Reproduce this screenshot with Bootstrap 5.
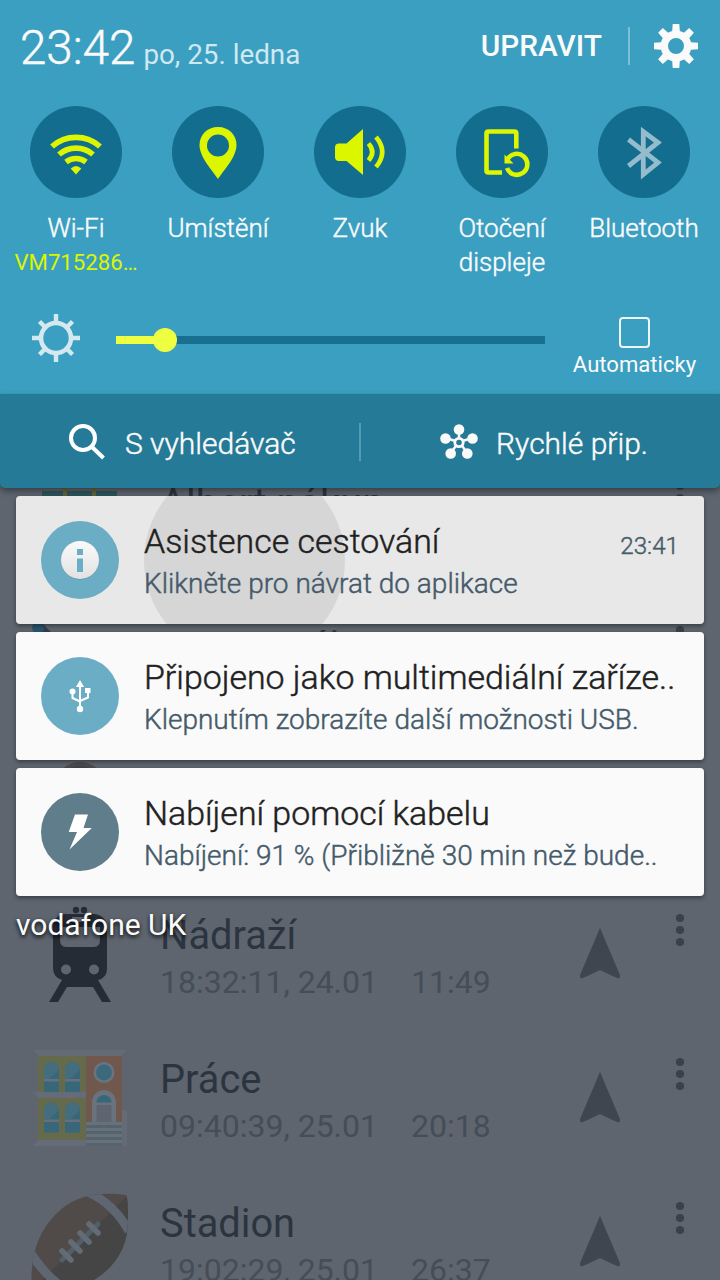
<!DOCTYPE html>
<html lang="cs">
<head>
<meta charset="utf-8">
<meta name="viewport" content="width=device-width, initial-scale=1">
<title>Oznámení</title>
<link href="https://cdn.jsdelivr.net/npm/bootstrap@5.3.0/dist/css/bootstrap.min.css" rel="stylesheet">
<style>
html,body{height:1280px;overflow:hidden}
body{font-family:Roboto,"Noto Sans",sans-serif;background:#5e656f;color:#fafafa;line-height:1;position:relative;width:720px}
svg{display:block;flex:none}
/* app list under the shade */
.app-head{height:456px}
.place{height:144px}
.place-icon{width:160px;padding-left:32px;padding-top:24px}
.place-text{width:420px;padding-top:25px}
.place-name{font-size:39.8px;line-height:46px;color:#2c3440;white-space:nowrap}
.place-meta{font-size:32px;line-height:38px;color:#454d57;margin-top:4px}
.place-date{width:251px}
.place-nav{width:40px;padding-top:40px}
.place-more{padding-left:56px;padding-top:24px}
/* shade */
.shade{position:absolute;left:0;top:0;width:720px;z-index:2}
.quick{background:#3b9fc1;height:394px}
.head{height:92px;padding:0 22px 0 20px}
.clock{font-size:47.5px;line-height:56px}
.date{font-size:27.8px;line-height:34px;color:#d0e8f0;margin-left:8px}
.edit{font-size:29.8px;font-weight:500;line-height:34px;margin-right:2px}
.vline{width:2px;height:38px;background:#7dbfd6}
.toggles{height:222px;padding:14px 5px 0}
.toggle{width:142px}
.disc{width:92px;height:92px;background:#136d8f;border-radius:50%}
.toggle-name{font-size:26px;line-height:33.5px;margin-top:14px}
.ssid{font-size:22.2px;line-height:30px;color:#dcf600;margin-top:1px}
.bright{padding-left:32px}
.track{width:429px;height:8px;background:#196f8f;margin:22px 0 0 36px}
.track-on{height:8px;width:49px;background:#eeff41}
.knob{width:24px;height:24px;border-radius:50%;background:#eeff41;position:absolute;left:37px;top:-8px}
.autobox{padding:3px 0 0 4px}
.box{width:31px;height:31px;border:2.5px solid #eef5f8;border-radius:4px}
.auto{font-size:22.1px;line-height:28px;margin-top:2px}
.links{background:#257b97;height:94px;border-radius:0 0 5px 5px;box-shadow:0 3px 6px rgba(0,0,0,.4);padding-top:2px}
.lk{font-size:30px;line-height:36px}
.lka{width:359px;padding-left:69px}
.lka .lk{margin-left:20px;margin-top:3px}
.lkb{padding-left:79px}
.lkb .lk{margin-left:18px;margin-top:3px}
.notes{padding:8px 16px 0;gap:8px}
.note{height:128px;border-radius:4px;background:#fafafa;box-shadow:0 2px 4px rgba(0,0,0,.4);overflow:hidden;padding:25px 25px 0;position:relative}
.note.pressed{background:#e8e8e8}
.ripple{position:absolute;left:128px;top:-36px;width:201px;height:201px;border-radius:50%;background:#d6d6d6}
.ico{width:78px;height:78px;border-radius:50%;background:#6aadc4;position:relative}
.ico.slate{background:#607d8b}
.txt{margin-left:25px;position:relative;white-space:nowrap}
.ttl{font-size:33.9px;line-height:40px;color:#212121;margin-top:1px}
.sub{font-size:28px;line-height:34px;color:#455a6a;margin-top:5px}
.when{font-size:24.2px;line-height:30px;color:#455a6a;position:relative;margin-top:10px}
.clock,.toggle-name,.lk,.ttl,.sub,.when{font-weight:300;-webkit-text-stroke:.45px currentColor}
.carrier{font-size:30px;line-height:36px;padding:11px 16px;text-shadow:0 2px 4px #000}
</style>
</head>
<body>
<svg width="0" height="0" class="position-absolute"><defs>
<g id="nav"><path d="M20 0 40 47q.6 4-3 3L20 42 3 50q-3.600 1-3-3Z" fill="#3f4650"/></g>
<g id="dots" fill="#3a414b"><circle cx="4" cy="6" r="4.100"/><circle cx="4" cy="18" r="4.100"/><circle cx="4" cy="30" r="4.100"/></g>
</defs></svg>

<main>
 <div class="app-head"></div>
 <div class="place d-flex">
  <div class="place-icon"><svg width="96" height="96"><path d="M10 11h75v60H10Z" fill="#2d555c"/><path d="M31 8h4v60h-4ZM60 8h4v60h-4Z" fill="#65643f"/></svg></div>
  <div class="place-text"><div class="place-name">Albert nákup</div></div>
  <div class="place-nav"></div>
  <div class="place-more"><svg width="8" height="36" overflow="visible"><use href="#dots"/></svg></div>
 </div>
 <div class="place d-flex">
  <div class="place-icon"><svg width="96" height="96"><path d="M5 2 11 0 50 40 40 50 4 12Z" fill="#323e52"/><circle cx="6" cy="4" r="6" fill="#2b546b"/></svg></div>
  <div class="place-text"><div class="place-name">Pan Novák</div></div>
  <div class="place-nav"></div>
  <div class="place-more"><svg width="8" height="36" overflow="visible"><use href="#dots"/></svg></div>
 </div>
 <div class="place d-flex">
  <div class="place-icon"><svg width="96" height="96" overflow="visible"><circle cx="48" cy="20" r="26" fill="#4f4a4c"/><circle cx="48" cy="22" r="24" fill="#3d4550"/></svg></div>
 </div>
 <div class="place d-flex">
  <div class="place-icon"><svg width="96" height="96" overflow="visible"><g fill="#252c36"><circle cx="44" cy="-2" r="3.200"/><circle cx="52" cy="-2" r="3.200"/><path fill-rule="evenodd" d="M33 2h30q12 2 12 14v40q0 10-9 12l13 22h-9L61 75H35L26 90h-9l13-22q-9-3-9-12V16Q21 4 33 2ZM40 5v5h17V5ZM28 15v13q0 7 6 7h28q6 0 6-7V15ZM34 52.500a5 5 0 1 0 0 10 5 5 0 0 0 0-10ZM62 52.500a5 5 0 1 0 0 10 5 5 0 0 0 0-10Z"/></g></svg></div>
  <div class="place-text"><div class="place-name">Nádraží</div><div class="place-meta d-flex"><span class="place-date">18:32:11, 24.01</span><span>11:49</span></div></div>
  <div class="place-nav"><svg width="40" height="52"><use href="#nav"/></svg></div>
  <div class="place-more"><svg width="8" height="36" overflow="visible"><use href="#dots"/></svg></div>
 </div>
 <div class="place d-flex">
  <div class="place-icon"><svg width="96" height="96" overflow="visible">
   <path d="M1-6h94l-6 6H7Z" fill="#646b76"/><path d="M6 0h48v84H6Z" fill="#666a4c"/><path d="M54 0h36v66H54Z" fill="#70584e"/>
   <path d="M1 36h53v6H7ZM6 84h48v6H1Z" fill="#656c77"/>
   <g id="wins"><g id="win"><path d="M12 36V13.500a7.500 7.500 0 0 1 15 0V36Z" fill="#376779"/><path d="M12 23V13.500a7.500 7.500 0 0 1 15 0L17 23Z" fill="#446e7e"/><path d="M12 23h15v2.500H12Z" fill="#68717b"/></g><use href="#win" x="21"/></g><use href="#wins" y="40.500"/>
   <circle cx="72" cy="16.500" r="9.200" fill="#3b6a7c" stroke="#6b747e" stroke-width="2.600"/>
   <path d="M60 66V46a12 12 0 0 1 24 0v20Z" fill="#6a727d"/><path d="M64.500 46.500a7.500 7.500 0 0 1 15 0Z" fill="#376779"/><path d="M64.500 49h15v17h-15Z" fill="#5f6570"/>
   <path d="M54 66h36v24H54Z" fill="#65717b"/><path d="M54 69h36v3H54ZM54 75h36v3H54ZM54 81h36v3H54ZM54 87h36v3H54Z" fill="#56626c"/><path d="M90 54h5v36h-5Z" fill="#646b76"/>
  </svg></div>
  <div class="place-text"><div class="place-name">Práce</div><div class="place-meta d-flex"><span class="place-date">09:40:39, 25.01</span><span>20:18</span></div></div>
  <div class="place-nav"><svg width="40" height="52"><use href="#nav"/></svg></div>
  <div class="place-more"><svg width="8" height="36" overflow="visible"><use href="#dots"/></svg></div>
 </div>
 <div class="place d-flex">
  <div class="place-icon"><svg width="96" height="96" overflow="visible">
   <clipPath id="ball"><path d="M94-5Q96-3 96 18 97 58 62 80 38 92 0 90-4 42 24 14 48-11 94-5Z"/></clipPath>
   <g clip-path="url(#ball)"><path d="M-5-10h105v110H-5Z" fill="#504b49"/><path d="M97-6V95H-5Z" fill="#464545"/>
   <path d="M56-8q26 12 41 39M-2 52q18 28 40 40" fill="none" stroke="#5d6671" stroke-width="9"/></g>
   <path d="M30 60 66 24" stroke="#525e68" stroke-width="5" stroke-linecap="round"/>
   <path d="m57 24 9 9M48 33l9 9M39 42l9 9M30 51l9 9" stroke="#626c76" stroke-width="5.500" stroke-linecap="round"/>
  </svg></div>
  <div class="place-text"><div class="place-name">Stadion</div><div class="place-meta d-flex"><span class="place-date">19:02:29, 25.01</span><span>26:37</span></div></div>
  <div class="place-nav"><svg width="40" height="52"><use href="#nav"/></svg></div>
  <div class="place-more"><svg width="8" height="36" overflow="visible"><use href="#dots"/></svg></div>
 </div>
</main>

<section class="shade">
 <header class="quick">
  <div class="head d-flex align-items-center">
   <div class="d-flex align-items-baseline flex-grow-1 pt-1"><span class="clock">23:42</span><span class="date">po, 25. ledna</span></div>
   <span class="edit">UPRAVIT</span><span class="vline ms-4 me-4"></span>
   <svg width="44" height="44" viewBox="-22 -22 44 44"><g fill="#fafafa"><g id="t1"><path id="t0" d="M-3.300-22h6.600L4-12h-8ZM-3.300 22h6.600L4 12h-8Z"/><use href="#t0" transform="rotate(90)"/></g><use href="#t1" transform="rotate(45)"/></g><circle r="11.700" fill="none" stroke="#fafafa" stroke-width="7.400"/></svg>
  </div>
  <div class="toggles d-flex text-center">
   <div class="toggle"><div class="disc mx-auto"><svg width="92" height="92" fill="none" stroke="#dcf600" stroke-width="5.600"><path d="M22 40.500a36 36 0 0 1 48 0M29 48.500a26 26 0 0 1 34 0M36 56a16 16 0 0 1 20 0"/><path d="M40.700 62.500q5.300-5 10.600 0L46 68.500Z" fill="#dcf600" stroke="none"/></svg></div><div class="toggle-name">Wi-Fi</div><div class="ssid">VM715286…</div></div>
   <div class="toggle"><div class="disc mx-auto"><svg width="92" height="92"><path fill="#dcf600" fill-rule="evenodd" d="M46 21c11 0 18.500 8 18.500 18C64.500 51 52 64 46 73 40 64 27.500 51 27.500 39 27.500 29 35 21 46 21Zm0 7.500a11 11 0 1 0 0 22 11 11 0 0 0 0-22Z"/></svg></div><div class="toggle-name">Umístění</div></div>
   <div class="toggle"><div class="disc mx-auto"><svg width="92" height="92"><path fill="#dcf600" d="M25 37.500h7.500L49 23v46L32.500 55H25q-4 0-4-4v-9.500q0-4 4-4Z"/><path d="M54.500 37.500q7.500 8.500 0 17M62 31q12.500 15 0 30" fill="none" stroke="#dcf600" stroke-width="4.600"/></svg></div><div class="toggle-name">Zvuk</div></div>
   <div class="toggle"><div class="disc mx-auto"><svg width="92" height="92" fill="none" stroke="#dcf600" stroke-width="4.600"><path d="M60.300 42.500V27.500q0-2-2-2H32.500q-2 0-2 2v37q0 2 2 2H46"/><path d="M51.500 53.500A10.500 10.500 0 1 1 51 62"/><path d="M48.500 48.500v9h9Z" fill="#dcf600" stroke="none"/></svg></div><div class="toggle-name">Otočení<br>displeje</div></div>
   <div class="toggle"><div class="disc mx-auto"><svg width="92" height="92"><path d="M30.500 33.500 60 56.500 45.300 68.500V25.500L60 36.500 30.500 60" fill="none" stroke="#94bccd" stroke-width="4.800"/></svg></div><div class="toggle-name">Bluetooth</div></div>
  </div>
  <div class="bright d-flex">
   <svg width="48" height="48" viewBox="-24 -24 48 48"><circle r="15" fill="none" stroke="#d4e8ef" stroke-width="4.600"/><path stroke="#d4e8ef" stroke-width="4.400" d="M0-24v8M0 24v-8M-24 0h8M24 0h-8M-16.500-16.500l5 5M16.500 16.500l-5-5M-16.500 16.500l5-5M16.500-16.500l-5 5"/></svg>
   <div class="track position-relative"><div class="track-on"></div><span class="knob"></span></div>
   <div class="autobox flex-grow-1 d-flex flex-column align-items-center"><span class="box"></span><span class="auto">Automaticky</span></div>
  </div>
 </header>
 <nav class="links d-flex align-items-center">
  <div class="d-flex align-items-center lka"><svg width="36" height="36" fill="none" stroke="#fff" stroke-width="4"><circle cx="14" cy="14" r="12"/><path d="m22.500 22.500 12 11.500"/></svg><span class="lk">S vyhledávač</span></div>
  <span class="vline opacity-50"></span>
  <div class="d-flex align-items-center lkb"><svg width="38" height="36" stroke="#fafafa" stroke-width="2.500"><path d="M19 18V6M19 18 5.500 14M19 18l13.500-4M19 18l-8.500 11M19 18l8.500 11"/><circle cx="19" cy="18.500" r="4.200" fill="#257b97" stroke-width="2.800"/><g fill="#fafafa" stroke="none"><circle cx="19" cy="5.500" r="5.300"/><circle cx="5.500" cy="14.500" r="5.300"/><circle cx="32.500" cy="14.500" r="5.300"/><circle cx="10.700" cy="29.500" r="5.300"/><circle cx="27.300" cy="29.500" r="5.300"/></g></svg><span class="lk">Rychlé přip.</span></div>
 </nav>
 <div class="notes d-flex flex-column">
  <article class="note pressed d-flex align-items-start"><span class="ripple"></span>
   <div class="ico"><svg width="78" height="78"><defs><linearGradient id="g" x2="0" y2="1"><stop stop-color="#fafafa"/><stop offset="1" stop-color="#e2e2e2"/></linearGradient></defs><circle cx="39" cy="39.600" r="19" fill="#5797ad"/><circle cx="39" cy="39" r="19" fill="url(#g)"/><path d="M36 28h6v6h-6ZM36 37.500h6V51h-6Z" fill="#6aadc4"/></svg></div>
   <div class="txt flex-grow-1"><div class="ttl">Asistence cestování</div><div class="sub">Klikněte pro návrat do aplikace</div></div><span class="when">23:41</span>
  </article>
  <article class="note d-flex align-items-start">
   <div class="ico"><svg width="78" height="78" fill="none" stroke="#fff" stroke-width="2"><path d="M39 28v22M31.500 35v6l7.500 3.500M47 34v6.500L39 44"/><g fill="#fff" stroke="none"><path d="m39 23 4 7h-8ZM44 31h5.500v5H44Z"/><circle cx="31.500" cy="34.500" r="3"/><circle cx="39" cy="52" r="3.200"/></g></svg></div>
   <div class="txt"><div class="ttl">Připojeno jako multimediální zaříze..</div><div class="sub">Klepnutím zobrazíte další možnosti USB.</div></div>
  </article>
  <article class="note d-flex align-items-start">
   <div class="ico slate"><svg width="78" height="78"><path d="M34 21.500h13L42.500 35h8.300L28.500 56.500 36 39h-8.300Z" fill="#fff"/></svg></div>
   <div class="txt"><div class="ttl">Nabíjení pomocí kabelu</div><div class="sub">Nabíjení: 91 % (Přibližně 30 min než bude..</div></div>
  </article>
 </div>
 <div class="carrier">vodafone UK</div>
</section>
<script src="https://cdn.jsdelivr.net/npm/bootstrap@5.3.0/dist/js/bootstrap.bundle.min.js"></script>
</body>
</html>
